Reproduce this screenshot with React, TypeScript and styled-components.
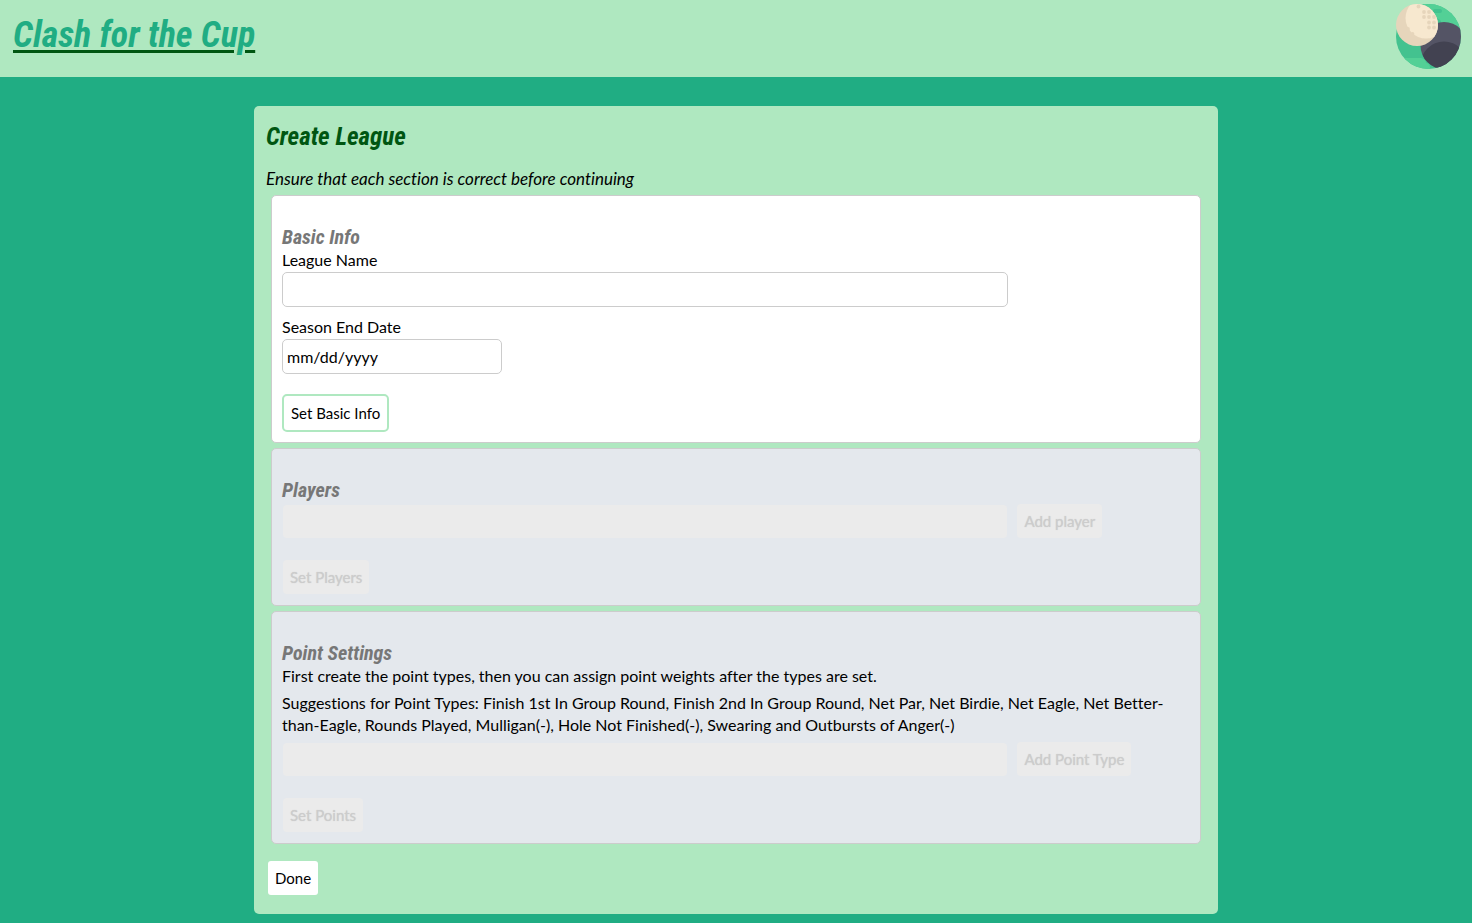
import React from "react";
import styled, { createGlobalStyle, css } from "styled-components";

const colors = {
  jungle: "#20ad83",
  mint: "#afe8c0",
  forest: "#005612",
  grey: "#777777",
  line: "#cccccc",
  locked: "#e4e8ed",
  disabled: "#ebebeb",
};

const displayFont = `"Roboto Condensed", "Open Sans Condensed", Roboto, sans-serif`;

const GlobalStyle = createGlobalStyle`
  * { box-sizing: border-box; }
  body {
    margin: 0;
    background: ${colors.jungle};
    color: #000;
    font-family: Lato, "Open Sans", sans-serif;
    font-size: 16px;
    line-height: 22px;
    font-variant-ligatures: none;
  }
  input, button { font-family: inherit; }
`;

const Header = styled.header`
  display: flex;
  justify-content: space-between;
  align-items: flex-start;
  height: 77px;
  padding: 3px 10px 0 13px;
  background: ${colors.mint};
`;

const Title = styled.h1`
  margin: 0;
  padding-top: 5px;
  font-family: ${displayFont};
  font-size: 36px;
  font-style: italic;
  font-weight: 700;
  line-height: 54px;
`;

const HomeLink = styled.a`
  color: ${colors.jungle};
  text-decoration: underline 3px ${colors.forest};
  text-underline-offset: 3px;
`;

const Logo = styled.svg`
  display: block;
  width: 67px;
  height: 67px;
`;

const Panel = styled.main`
  width: calc(100% - 40px);
  max-width: 964px;
  margin: 29px auto 9px;
  padding: 12px;
  border-radius: 5px;
  background: ${colors.mint};
`;

const PanelTitle = styled.h2`
  margin: 0 0 12px;
  color: ${colors.forest};
  font-family: ${displayFont};
  font-size: 25px;
  font-style: italic;
  font-weight: 700;
  line-height: 38px;
`;

const Hint = styled.p`
  margin: 0;
  font-size: 17px;
  font-style: italic;
`;

const Section = styled.section<{ $locked?: boolean }>`
  margin: 5px;
  padding: 29px 10px 10px;
  border: 1px solid ${colors.line};
  border-radius: 5px;
  background: ${(p) => (p.$locked ? colors.locked : "#fff")};
`;

const SectionTitle = styled.h3`
  margin: 0;
  color: ${colors.grey};
  font-family: ${displayFont};
  font-size: 20px;
  font-style: italic;
  font-weight: 700;
  line-height: 24px;
`;

const Field = styled.div`
  display: flex;
  flex-direction: column;
  align-items: flex-start;
  gap: 1px;
  margin-bottom: 9px;
`;

const TextInput = styled.input<{ $short?: boolean }>`
  width: ${(p) => (p.$short ? "220px" : "80%")};
  height: 35px;
  padding: 0 4px;
  border: 1px solid ${colors.line};
  border-radius: 5px;
  background: #fff;
  color: #000;
  font-size: 16px;
  &::placeholder { color: #000; opacity: 1; }
  &:disabled {
    border-color: transparent;
    background: ${colors.disabled};
    background-clip: padding-box;
  }
`;

const Text = styled.p`
  margin: 0 0 5px;
`;

const AddRow = styled.div`
  display: flex;
  align-items: flex-end;
  gap: 8px;
  margin-top: 1px;
`;

const Button = styled.button<{ $outlined?: boolean }>`
  height: 34px;
  padding: 0 7px;
  border: 0;
  border-radius: 3px;
  background: #fff;
  color: #000;
  font-size: 15px;
  line-height: 20px;
  white-space: nowrap;
  ${(p) =>
    p.$outlined &&
    css`
      height: 38px;
      border: 2px solid ${colors.mint};
      border-radius: 5px;
    `}
  &:disabled {
    height: 36px;
    border: 1px solid transparent;
    border-radius: 5px;
    background: ${colors.disabled};
    background-clip: padding-box;
    color: ${colors.line};
    text-shadow: 0 0 1px ${colors.line};
  }
`;

const Actions = styled.div`
  display: flex;
  margin-top: 20px;
`;

const Footer = styled.footer`
  display: flex;
  padding: 12px 2px 7px;
`;

function GolfLogo() {
  return (
    <Logo viewBox="0 0 67 67" role="img" aria-label="Golf ball">
      <defs>
        <clipPath id="disc"><circle cx="33.5" cy="33.5" r="32.5" /></clipPath>
        <clipPath id="ball"><circle cx="22" cy="22" r="21" /></clipPath>
        <clipPath id="dark"><circle cx="49" cy="42.5" r="23.5" /></clipPath>
      </defs>
      <g clipPath="url(#disc)">
        <rect width="67" height="67" fill="#43c28f" />
        <path d="M28 0H67V26H52Q46 24 46 19Q46 16 40 15Q36 8 28 5Z" fill="#53d096" />
        <rect x="38" y="6" width="9" height="4" rx="2" fill="#43c28f" />
        <path d="M0 55H26Q31 56 31 60Q34 60 35 64V67H0Z" fill="#53d096" />
        <circle cx="49" cy="42.5" r="23.5" fill="#545465" />
        <circle cx="49" cy="62" r="23.5" fill="#424251" clipPath="url(#dark)" />
      </g>
      <circle cx="22" cy="22" r="21" fill="#e6d5bb" />
      <circle cx="31" cy="15" r="20.5" fill="#f7e8cf" clipPath="url(#ball)" />
      <g fill="#e6d5bb">
        <circle cx="23.5" cy="3.5" r="1.9" />
        <circle cx="29" cy="9" r="1.9" />
        <circle cx="34" cy="9" r="1.9" />
        <circle cx="29" cy="14" r="1.9" />
        <circle cx="34" cy="14" r="1.9" />
        <circle cx="34" cy="19.5" r="1.9" />
        <circle cx="39" cy="19.5" r="1.9" />
        <circle cx="34" cy="24.5" r="1.9" />
        <circle cx="39" cy="24.5" r="1.9" />
        <circle cx="39" cy="14" r="1.9" />
        <circle cx="13" cy="26" r="1.9" />
        <circle cx="17.5" cy="31" r="1.9" />
      </g>
    </Logo>
  );
}

export default function App() {
  return (
    <>
      <GlobalStyle />
      <Header>
        <Title><HomeLink href="#">Clash for the Cup</HomeLink></Title>
        <GolfLogo />
      </Header>
      <Panel>
        <PanelTitle>Create League</PanelTitle>
        <Hint>Ensure that each section is correct before continuing</Hint>
        <Section>
          <SectionTitle>Basic Info</SectionTitle>
          <Field>
            <label htmlFor="league-name">League Name</label>
            <TextInput id="league-name" type="text" />
          </Field>
          <Field>
            <label htmlFor="season-end">Season End Date</label>
            <TextInput id="season-end" type="text" placeholder="mm/dd/yyyy" $short />
          </Field>
          <Actions><Button type="button" $outlined>Set Basic Info</Button></Actions>
        </Section>
        <Section $locked>
          <SectionTitle>Players</SectionTitle>
          <AddRow>
            <TextInput type="text" aria-label="Player name" disabled />
            <Button type="button" disabled>Add player</Button>
          </AddRow>
          <Actions><Button type="button" disabled>Set Players</Button></Actions>
        </Section>
        <Section $locked>
          <SectionTitle>Point Settings</SectionTitle>
          <Text>First create the point types, then you can assign point weights after the types are set.</Text>
          <Text>
            Suggestions for Point Types: Finish 1st In Group Round, Finish 2nd In Group Round, Net Par,
            Net Birdie, Net Eagle, Net Better-than-Eagle, Rounds Played, Mulligan(-), Hole Not
            Finished(-), Swearing and Outbursts of Anger(-)
          </Text>
          <AddRow>
            <TextInput type="text" aria-label="Point type" disabled />
            <Button type="button" disabled>Add Point Type</Button>
          </AddRow>
          <Actions><Button type="button" disabled>Set Points</Button></Actions>
        </Section>
        <Footer><Button type="button">Done</Button></Footer>
      </Panel>
    </>
  );
}
